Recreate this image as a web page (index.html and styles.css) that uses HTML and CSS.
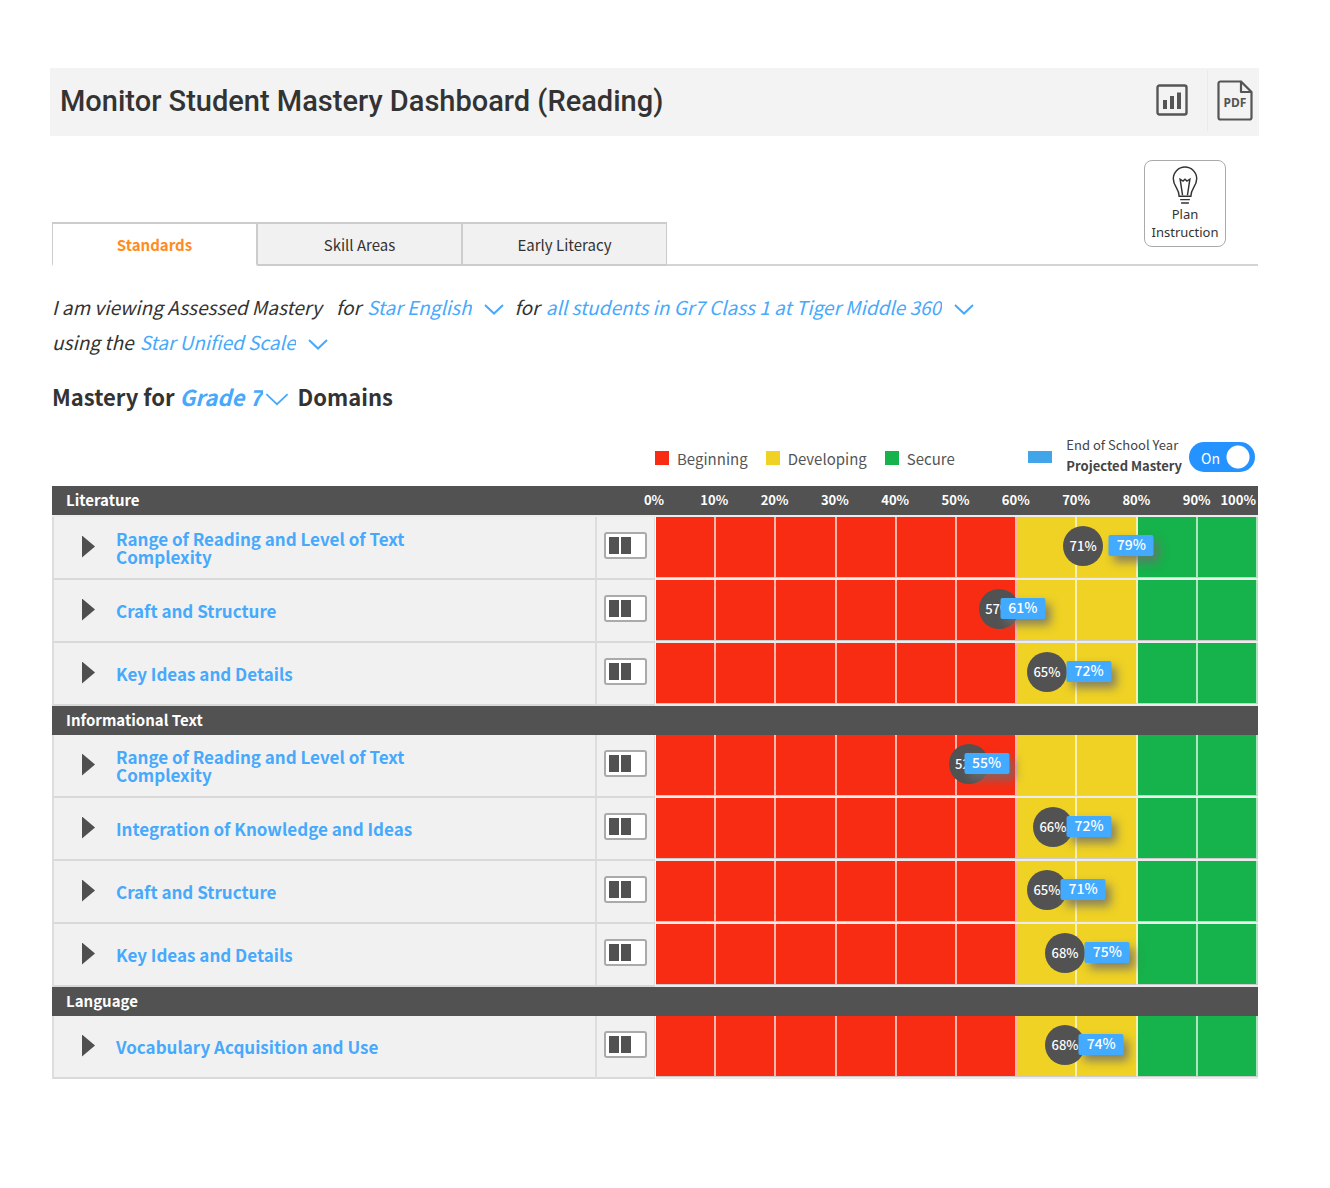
FILE: index.html
```html
<!DOCTYPE html>
<html lang="en">
<head>
    <meta charset="UTF-8">
    <meta name="viewport" content="width=device-width, initial-scale=1.0">
    <title>Monitor Student Mastery Dashboard</title>
    <link rel="stylesheet" href="styles.css">
</head>
<body>
    <div class="page">
        <header class="header">
            <h1>Monitor Student Mastery Dashboard (Reading)</h1>
            <div class="header-actions">
                <button class="icon-button" aria-label="Charts">
                    <svg width="32" height="32" viewBox="0 0 32 32" fill="none" stroke="#555">
                        <rect x="1.5" y="1.5" width="29" height="29" rx="2" stroke-width="2.4"/>
                        <path d="M9 25v-9M16 25V12M23 25V8.500" stroke-width="4"/>
                    </svg>
                </button>
                <button class="icon-button pdf" aria-label="Download PDF">
                    <svg width="36" height="41" viewBox="0 0 36 41" fill="none" stroke="#555" stroke-width="2.2">
                        <path d="M24 1.500H3.500a2 2 0 0 0-2 2v34a2 2 0 0 0 2 2h29a2 2 0 0 0 2-2V12L24 1.500v10.500h10.500" stroke-linejoin="round"/>
                        <text class="pdf-text" x="18" y="27" text-anchor="middle">PDF</text>
                    </svg>
                </button>
            </div>
        </header>

        <main class="content">
            <div class="toolbar">
                <nav class="tabs">
                    <button class="tab active">Standards</button>
                    <button class="tab">Skill Areas</button>
                    <button class="tab">Early Literacy</button>
                </nav>
                <button class="plan-button">
                    <svg width="26" height="40" viewBox="0 0 26 40" fill="none" stroke="#333" stroke-width="1.500">
                        <path d="M7 31c0-8-6-10-6-18a12 12 0 0 1 24 0c0 8-6 10-6 18z"/>
                        <path d="M10.500 30L8 13.500l3 2 2-2 2 2 3-2L15.500 30"/>
                        <path d="M8 34.500h10M9 38h8"/>
                    </svg>
                    <span>Plan Instruction</span>
                </button>
            </div>

            <div class="filters">
                <span>I am viewing Assessed Mastery</span>
                <span class="filter">for
                    <select aria-label="Standards set"><option>Star English</option></select>
                    <svg class="chevron" viewBox="0 0 20 11"><path d="M1 1l9 8.500L19 1"/></svg>
                </span>
                <span class="filter">for
                    <select aria-label="Students"><option>all students in Gr7 Class 1 at Tiger Middle 360</option></select>
                    <svg class="chevron" viewBox="0 0 20 11"><path d="M1 1l9 8.500L19 1"/></svg>
                </span>
                <br>
                <span class="filter">using the
                    <select aria-label="Scale"><option>Star Unified Scale</option></select>
                    <svg class="chevron" viewBox="0 0 20 11"><path d="M1 1l9 8.500L19 1"/></svg>
                </span>
            </div>

            <h2 class="domains-title">Mastery for
                <span class="grade"><select aria-label="Grade"><option>Grade 7</option></select><svg class="chevron" viewBox="0 0 20 11"><path d="M1 1l9 8.500L19 1"/></svg></span>
                Domains</h2>

            <div class="legend-row">
                <ul class="legend">
                    <li><span class="swatch beginning"></span>Beginning</li>
                    <li><span class="swatch developing"></span>Developing</li>
                    <li><span class="swatch secure"></span>Secure</li>
                </ul>
                <div class="projected">
                    <span class="swatch projected-swatch"></span>
                    <label for="projected-toggle">End of School Year<br><strong>Projected Mastery</strong></label>
                    <div class="toggle">
                        <input type="checkbox" id="projected-toggle" checked>
                        <span class="toggle-text">On</span>
                    </div>
                </div>
            </div>

            <table class="mastery">
                <colgroup>
                    <col class="col-name">
                    <col class="col-status">
                    <col class="col-chart">
                </colgroup>
                <thead>
                    <tr class="group first">
                        <th colspan="2">Literature</th>
                        <th class="axis-cell">
                            <div class="axis">
                                <span>0%</span><span>10%</span><span>20%</span><span>30%</span><span>40%</span><span>50%</span><span>60%</span><span>70%</span><span>80%</span><span>90%</span><span class="last">100%</span>
                            </div>
                        </th>
                    </tr>
                </thead>
                <tbody id="mastery-rows"></tbody>
            </table>
        </main>
    </div>

    <script src="script.js"></script>
</body>
</html>
```
FILE: styles.css
```css
* {
    box-sizing: border-box;
}

body {
    margin: 0;
    background: #fff;
    color: #333;
    font-family: "Noto Sans CJK SC", "Noto Sans", sans-serif;
}

button,
select {
    font: inherit;
    color: inherit;
    cursor: pointer;
}

.page {
    padding: 68px 71px 40px 50px;
}

/* Header */
.header {
    display: flex;
    justify-content: space-between;
    align-items: center;
    height: 68px;
    padding: 0 6px 2px 10px;
    background: #f3f3f3;
}

.header h1 {
    margin: 0;
    font-family: Roboto, sans-serif;
    font-size: 29px;
    font-weight: 500;
    line-height: 36px;
}

.header-actions {
    display: flex;
    align-items: center;
    gap: 19px;
    padding-bottom: 2px;
}

.icon-button {
    display: flex;
    padding: 0;
    border: none;
    background: none;
}

.icon-button.pdf {
    padding: 10px 0 10px 9px;
    border-left: 1px solid #eaeaea;
}

.pdf-text {
    font-family: "Noto Sans", sans-serif;
    font-size: 12px;
    font-weight: 700;
    fill: #555;
    stroke: none;
}

.content {
    padding: 0 1px 0 2px;
}

/* Tabs */
.toolbar {
    display: flex;
    justify-content: space-between;
    align-items: flex-end;
    height: 130px;
    border-bottom: 2px solid #d4d4d4;
}

.tabs {
    display: flex;
    margin-bottom: -2px;
}

.tab {
    width: 205px;
    height: 44px;
    padding: 0;
    border: 2px solid #ccc;
    border-left-width: 1px;
    border-right-width: 1px;
    background: #f1f1f1;
    font-size: 15px;
}

.tab.active {
    border-bottom-color: #fff;
    background: #fff;
    color: #ff8c1e;
    font-weight: 700;
}

.plan-button {
    display: flex;
    flex-direction: column;
    align-items: center;
    width: 82px;
    height: 87px;
    margin: 0 32px 17px 0;
    padding: 5px 0;
    border: 1px solid #aaa;
    border-radius: 8px;
    background: #fff;
    font-family: "Noto Sans", sans-serif;
    font-size: 13px;
    line-height: 18px;
}

/* Filter sentence */
.filters {
    margin-top: 23px;
    font-size: 19px;
    font-style: italic;
    line-height: 35px;
}

.filter {
    margin-left: 10px;
    white-space: nowrap;
}

.filter + .filter {
    margin-left: 4px;
}

br + .filter {
    margin-left: 0;
}

select {
    appearance: none;
    padding: 0;
    border: none;
    background: none;
    color: #47a9fb;
}

.filters select {
    padding: 0 2px;
}

.chevron {
    width: 20px;
    height: 11px;
    margin: 0 2px 0 6px;
    fill: none;
    stroke: #47a9fb;
    stroke-width: 2;
}

.domains-title {
    margin: 19px 0 0;
    font-size: 22px;
    font-weight: 700;
    line-height: 36px;
}

.grade {
    font-style: italic;
}

.grade .chevron {
    width: 24px;
    height: 13px;
    margin: 0 4px 0 2px;
    stroke-width: 1.500;
}

/* Legend */
.legend-row {
    display: flex;
    justify-content: space-between;
    align-items: center;
    height: 58px;
    margin-top: 14px;
    padding-left: 50%;
}

.legend {
    display: flex;
    gap: 18px;
    margin: 0;
    padding: 2px 0 0;
    list-style: none;
    color: #555;
    font-size: 15px;
}

.legend li {
    display: flex;
    align-items: center;
    gap: 8px;
}

.swatch {
    width: 14px;
    height: 14px;
}

.beginning {
    background: #f82c13;
}

.developing {
    background: #efd223;
}

.secure {
    background: #16b24b;
}

.projected {
    display: flex;
    align-items: center;
    color: #444;
    font-size: 13px;
    line-height: 21px;
}

.projected label {
    padding-bottom: 5px;
}

.projected-swatch {
    width: 24px;
    height: 12px;
    margin-right: 14px;
    background: #42a5ea;
}

.toggle {
    position: relative;
    display: flex;
    margin: 0 3px 0 7px;
}

.toggle input {
    appearance: none;
    width: 66px;
    height: 30px;
    margin: 0;
    border-radius: 15px;
    background: radial-gradient(circle at 49px 15px, #fff 11px, #2492ff 12px);
    cursor: pointer;
}

.toggle-text {
    position: absolute;
    left: 12px;
    top: 6px;
    color: #fff;
    font-size: 14px;
    pointer-events: none;
}

/* Mastery table */
.mastery {
    width: 100%;
    table-layout: fixed;
    border-collapse: separate;
    border-spacing: 0;
}

.col-name {
    width: 45%;
}

.col-status {
    width: 5%;
}

.col-chart {
    width: 50%;
}

.mastery th,
.mastery td {
    padding: 0;
}

.group th {
    height: 29px;
    padding: 0 0 2px 14px;
    background: #525252;
    color: #fff;
    font-size: 15px;
    line-height: 20px;
    text-align: left;
}

.group.first th {
    height: 31px;
    border-bottom: 2px solid #ececec;
}

.group .axis-cell {
    padding-left: 0;
}

.axis {
    display: grid;
    grid-template-columns: repeat(10, 2fr) 1fr;
    margin-left: -5%;
    font-size: 13px;
}

.axis span {
    padding-right: 2px;
    text-align: center;
}

.axis .last {
    display: flex;
    justify-content: flex-end;
    min-width: 0;
}

.skill td {
    height: 63px;
    border-bottom: 2px solid #d9d9d9;
    background: #f1f1f1;
}

.skill .name-cell {
    border-left: 2px solid #ddd;
}

.name {
    display: flex;
    align-items: center;
    gap: 21px;
    padding: 0 0 2px 28px;
}

.expand {
    width: 13px;
    height: 22px;
    padding: 0;
    border: none;
    background: #4f4f4f;
    clip-path: polygon(0 0, 100% 50%, 0 100%);
}

.name a {
    max-width: 330px;
    padding-top: 3px;
    color: #47a9fb;
    font-size: 17px;
    font-weight: 700;
    line-height: 18px;
    text-decoration: none;
}

.skill .status-cell {
    border-left: 2px solid #ddd;
    border-right: 1px solid #ddd;
}

.battery {
    display: block;
    margin: 0 auto 5px;
}

.skill .chart-cell {
    border-bottom: 0;
    background: #fff;
}

.chart {
    position: relative;
    display: flex;
    height: 63px;
    padding-left: 1px;
    border-bottom: 2px solid #ececec;
}

.cell {
    flex: 1;
    border-right: 2px solid rgba(255, 255, 255, 0.65);
    border-bottom: 1px solid #ccc;
}

/* Markers sit over the bands at their percentage */
.current,
.goal {
    position: absolute;
    transform: translateX(-50%);
    color: #fff;
    font-weight: 500;
    text-align: center;
}

.current {
    top: 9px;
    width: 40px;
    height: 40px;
    border-radius: 50%;
    background: #525252;
    font-size: 13px;
    line-height: 40px;
}

.goal {
    top: 18px;
    width: 45px;
    height: 21px;
    border-radius: 2px;
    background: #42aaff;
    box-shadow: 5px 6px 10px rgba(110, 110, 110, 0.8);
    font-size: 14px;
    line-height: 19px;
}
```
FILE: script.js
```js
const groups = [
    {
        skills: [
            ['Range of Reading and Level of Text Complexity', 71, 79],
            ['Craft and Structure', 57, 61],
            ['Key Ideas and Details', 65, 72]
        ]
    },
    {
        title: 'Informational Text',
        skills: [
            ['Range of Reading and Level of Text Complexity', 52, 55],
            ['Integration of Knowledge and Ideas', 66, 72],
            ['Craft and Structure', 65, 71],
            ['Key Ideas and Details', 68, 75]
        ]
    },
    {
        title: 'Language',
        skills: [
            ['Vocabulary Acquisition and Use', 68, 74]
        ]
    }
];

const battery = `
    <svg class="battery" width="43" height="27" viewBox="0 0 43 27">
        <rect x="1" y="1" width="41" height="25" rx="2" fill="#fff" stroke="#aaa" stroke-width="2"/>
        <path d="M5 5h10v17H5zM17 5h10v17H17z" fill="#525252"/>
    </svg>`;

function bands() {
    let html = '';
    for (let i = 0; i < 10; i++) {
        const level = i < 6 ? 'beginning' : i < 8 ? 'developing' : 'secure';
        html += `<div class="cell ${level}"></div>`;
    }
    return html;
}

function skillRow([name, current, goal]) {
    return `
        <tr class="skill">
            <td class="name-cell">
                <div class="name">
                    <button class="expand" aria-label="Expand"></button>
                    <a href="#">${name}</a>
                </div>
            </td>
            <td class="status-cell">${battery}</td>
            <td class="chart-cell">
                <div class="chart">
                    ${bands()}
                    <span class="current" style="left: ${current}%">${current}%</span>
                    <span class="goal" style="left: ${goal}%">${goal}%</span>
                </div>
            </td>
        </tr>`;
}

document.getElementById('mastery-rows').innerHTML = groups.map(group => {
    const title = group.title ? `<tr class="group"><th colspan="3">${group.title}</th></tr>` : '';
    return title + group.skills.map(skillRow).join('');
}).join('');
```
